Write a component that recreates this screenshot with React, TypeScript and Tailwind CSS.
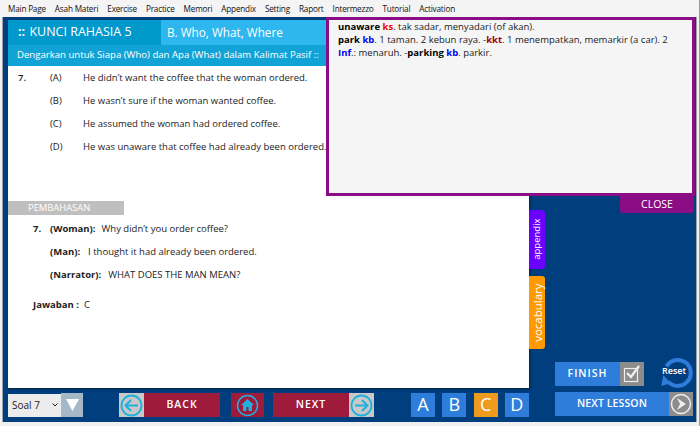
import React from "react";

const menu = ["Main Page","Asah Materi","Exercise","Practice","Memori","Appendix","Setting","Raport","Intermezzo","Tutorial","Activation"];

function ArrowBtn({ dir }: { dir: "l" | "r" }) {
  return (
    <div className="w-[25px] h-[24px] bg-[#c8c8c8] flex items-center justify-center shrink-0">
      <svg width="23" height="23" viewBox="0 0 23 23" fill="none" stroke="#1fb0e0" strokeWidth="1.8">
        <circle cx="11.5" cy="11.5" r="10" />
        <path d={dir === "l" ? "M18 11.5H6M11 6l-5.5 5.5L11 17" : "M5 11.5h12M12 6l5.5 5.5L12 17"} strokeWidth="2" />
      </svg>
    </div>
  );
}

function Letter({ t, on }: { t: string; on?: boolean }) {
  return (
    <div className={`w-[24px] h-[24px] pb-[2px] flex items-center justify-center text-white text-[18px] ${on ? "bg-[#ee9a1c]" : "bg-[#2f7ddb]"}`}>{t}</div>
  );
}

export default function App() {
  return (
    <div className="w-[700px] h-[426px] overflow-hidden flex flex-col bg-[#f0f0f0] text-[#222] font-['Open_Sans',sans-serif] relative border-r border-[#999]">
      <div className="h-[17px] shrink-0 flex items-center pl-[8px] pt-[1px] gap-[9px] text-[8.2px] tracking-[-0.2px] bg-[#f4f4f4] text-[#111]">
        {menu.map((m) => <span key={m}>{m}</span>)}
      </div>
      <div className="mx-[2px] flex-1 bg-[#003e7e] border-x border-[#9aa4ad] mb-[4px] flex flex-col pl-[5px] pt-[3px]">
        <div className="w-[521px] h-[368px] bg-white flex flex-col shadow-[1px_1px_2px_#0a2238] shrink-0">
          <div className="h-[25px] bg-[#0099cc] flex text-white text-[12.5px] shrink-0">
            <div className="w-[153px] pl-[10px] flex items-center"><span className="font-bold mr-[1px]">::</span>&nbsp;KUNCI RAHASIA 5</div>
            <div className="flex-1 bg-[#2eb6ee] pl-[6px] flex items-center text-[11.75px]">B. Who, What, Where</div>
          </div>
          <div className="h-[21px] bg-[#12a3d6] pl-[9px] flex items-center text-[9.6px] text-white shrink-0">Dengarkan untuk Siapa (Who) dan Apa (What) dalam Kalimat Pasif ::</div>
          <div className="pt-[5px] pl-[10px] text-[9.5px] flex flex-col gap-[9px]">
            {[["7.","(A)","He didn’t want the coffee that the woman ordered."],["","(B)","He wasn’t sure if the woman wanted coffee."],["","(C)","He assumed the woman had ordered coffee."],["","(D)","He was unaware that coffee had already been ordered."]].map(([n,l,t]) => (
              <div key={l} className="flex h-[14px] items-center">
                <span className="w-[32px] font-semibold">{n}</span>
                <span className="w-[33px]">{l}</span>
                <span>{t}</span>
              </div>
            ))}
          </div>
          <div className="mt-[47px] w-[116px] h-[14px] bg-[#bfbfbf] text-white text-[9.4px] pl-[20px] flex items-center">PEMBAHASAN</div>
          <div className="pt-[7px] pl-[25px] text-[9.5px] flex flex-col gap-[9px]">
            <div className="flex h-[14px] items-center">
              <span className="w-[17px] font-bold">7.</span>
              <span className="font-bold mr-[6px]">(Woman):</span>
              <span>Why didn’t you order coffee?</span>
            </div>
            <div className="flex h-[14px] items-center pl-[17px]">
              <span className="font-bold mr-[8px]">(Man):</span>
              <span>I thought it had already been ordered.</span>
            </div>
            <div className="flex h-[14px] items-center pl-[17px]">
              <span className="font-bold mr-[7px]">(Narrator):</span>
              <span>WHAT DOES THE MAN MEAN?</span>
            </div>
          </div>
          <div className="mt-[16px] pl-[25px] text-[9.5px] flex h-[14px] items-center">
            <span className="font-bold mr-[5px]">Jawaban :</span><span>C</span>
          </div>
        </div>
        <div className="flex items-center mt-[5px] h-[24px] w-[521px] text-white">
          <div className="w-[53px] h-[23px] bg-[#ececec] text-[#222] text-[10px] pl-[4px] flex items-center justify-between pr-[3px] shrink-0">
            <span>Soal 7</span>
            <svg width="6" height="4" viewBox="0 0 6 4" fill="none" stroke="#222"><path d="M.5.5 3 3 5.500.5"/></svg>
          </div>
          <div className="w-[22px] h-[24px] bg-[#a5b8c8] flex items-center justify-center shrink-0">
            <svg width="13" height="12" viewBox="0 0 13 12"><path d="M0 0h13L6.500 12z" fill="#fff"/></svg>
          </div>
          <div className="ml-[36px] flex shrink-0">
            <ArrowBtn dir="l" />
            <div className="w-[76px] h-[24px] bg-[#9e1b3c] flex items-center justify-center text-[10.5px] font-semibold tracking-[1px]">BACK</div>
          </div>
          <div className="ml-[11px] w-[33px] h-[24px] bg-[#9e1b3c] flex items-center justify-center shrink-0">
            <svg width="23" height="23" viewBox="0 0 23 23">
              <circle cx="11.500" cy="11.500" r="10" fill="none" stroke="#1fb0e0" strokeWidth="1.500"/>
              <path d="M11.500 5 5 11h2v6h3.500v-4h2v4H16v-6h2z" fill="#1fb0e0"/>
            </svg>
          </div>
          <div className="ml-[9px] flex shrink-0">
            <div className="w-[76px] h-[24px] bg-[#9e1b3c] flex items-center justify-center text-[10.5px] font-semibold tracking-[1px]">NEXT</div>
            <ArrowBtn dir="r" />
          </div>
          <div className="ml-[37px] flex gap-[7.3px] shrink-0">
            <Letter t="A" /><Letter t="B" /><Letter t="C" on /><Letter t="D" />
          </div>
        </div>
      </div>

      <div className="absolute left-[326px] top-[17px] w-[369px] h-[179px] bg-[#f5f5f5] border-[3px] border-[#8b0d85] pl-[9px] text-[9.5px] leading-[13px] text-[#222]">
        <div><b className="text-black">unaware</b> <b className="text-[#f00000]">ks</b>. tak sadar, menyadari (of akan).</div>
        <div><b className="text-black">park</b> <b className="text-[#0000f0]">kb</b>. 1 taman. 2 kebun raya. -<b className="text-[#a00000]">kkt</b>. 1 menempatkan, memarkir (a car). 2</div>
        <div><b className="text-[#0000f0]">Inf</b>.: menaruh. -<b className="text-black">parking</b> <b className="text-[#0000f0]">kb</b>. parkir.</div>
      </div>
      <div className="absolute left-[620px] top-[196px] w-[74px] h-[17px] bg-[#8b0d85] rounded-b-[3px] text-white text-[10.5px] flex items-center justify-center">CLOSE</div>

      <div className="absolute left-[529px] top-[210px] w-[16px] h-[59px] bg-[#6a00ff] rounded-r-[3px] flex items-center justify-center text-white text-[9.5px]">
        <span className="-rotate-90 whitespace-nowrap">appendix</span>
      </div>
      <div className="absolute left-[529px] top-[276px] w-[16px] h-[73px] bg-[#ff9900] rounded-r-[3px] flex items-center justify-center text-white text-[11.5px]">
        <span className="-rotate-90 whitespace-nowrap">vocabulary</span>
      </div>

      <div className="absolute left-[555px] top-[362px] flex">
        <div className="w-[65px] h-[24px] bg-[#2f7ddb] text-white text-[10.5px] font-semibold tracking-[1px] flex items-center justify-center">FINISH</div>
        <div className="w-[24px] h-[24px] bg-[#8c8c8c] flex items-center justify-center">
          <svg width="18" height="18" viewBox="0 0 18 18" fill="none" stroke="#eee">
            <rect x="1.500" y="3.500" width="13" height="13" strokeWidth="1.200"/>
            <path d="M4 8l4 4 8-11" strokeWidth="2.400"/>
          </svg>
        </div>
      </div>
      <div className="absolute left-[555px] top-[392px] flex">
        <div className="w-[114px] h-[24px] bg-[#2f7ddb] text-white text-[10.5px] font-semibold tracking-[.1px] flex items-center justify-center">NEXT LESSON</div>
        <div className="w-[24px] h-[24px] bg-[#8c8c8c] flex items-center justify-center">
          <svg width="22" height="22" viewBox="0 0 22 22">
            <circle cx="11" cy="11" r="9.500" fill="none" stroke="#eee" strokeWidth="1.500"/>
            <path d="M7 5l9 6-9 6 3-6z" fill="#eee"/>
          </svg>
        </div>
      </div>
      <div className="absolute left-[660px] top-[357px] w-[34px] h-[32px]">
        <svg width="34" height="32" viewBox="0 0 34 32" fill="none" className="absolute inset-0">
          <path d="M6.500 9.500A13 13 0 1 1 8 24.500" stroke="#2f7ddb" strokeWidth="4"/>
          <path d="M1.300 29l2-11 7.400 8.300z" fill="#2f7ddb"/>
        </svg>
        <span className="absolute left-[2px] top-[7px] text-[9px] font-semibold text-white">Reset</span>
      </div>
    </div>
  );
}
